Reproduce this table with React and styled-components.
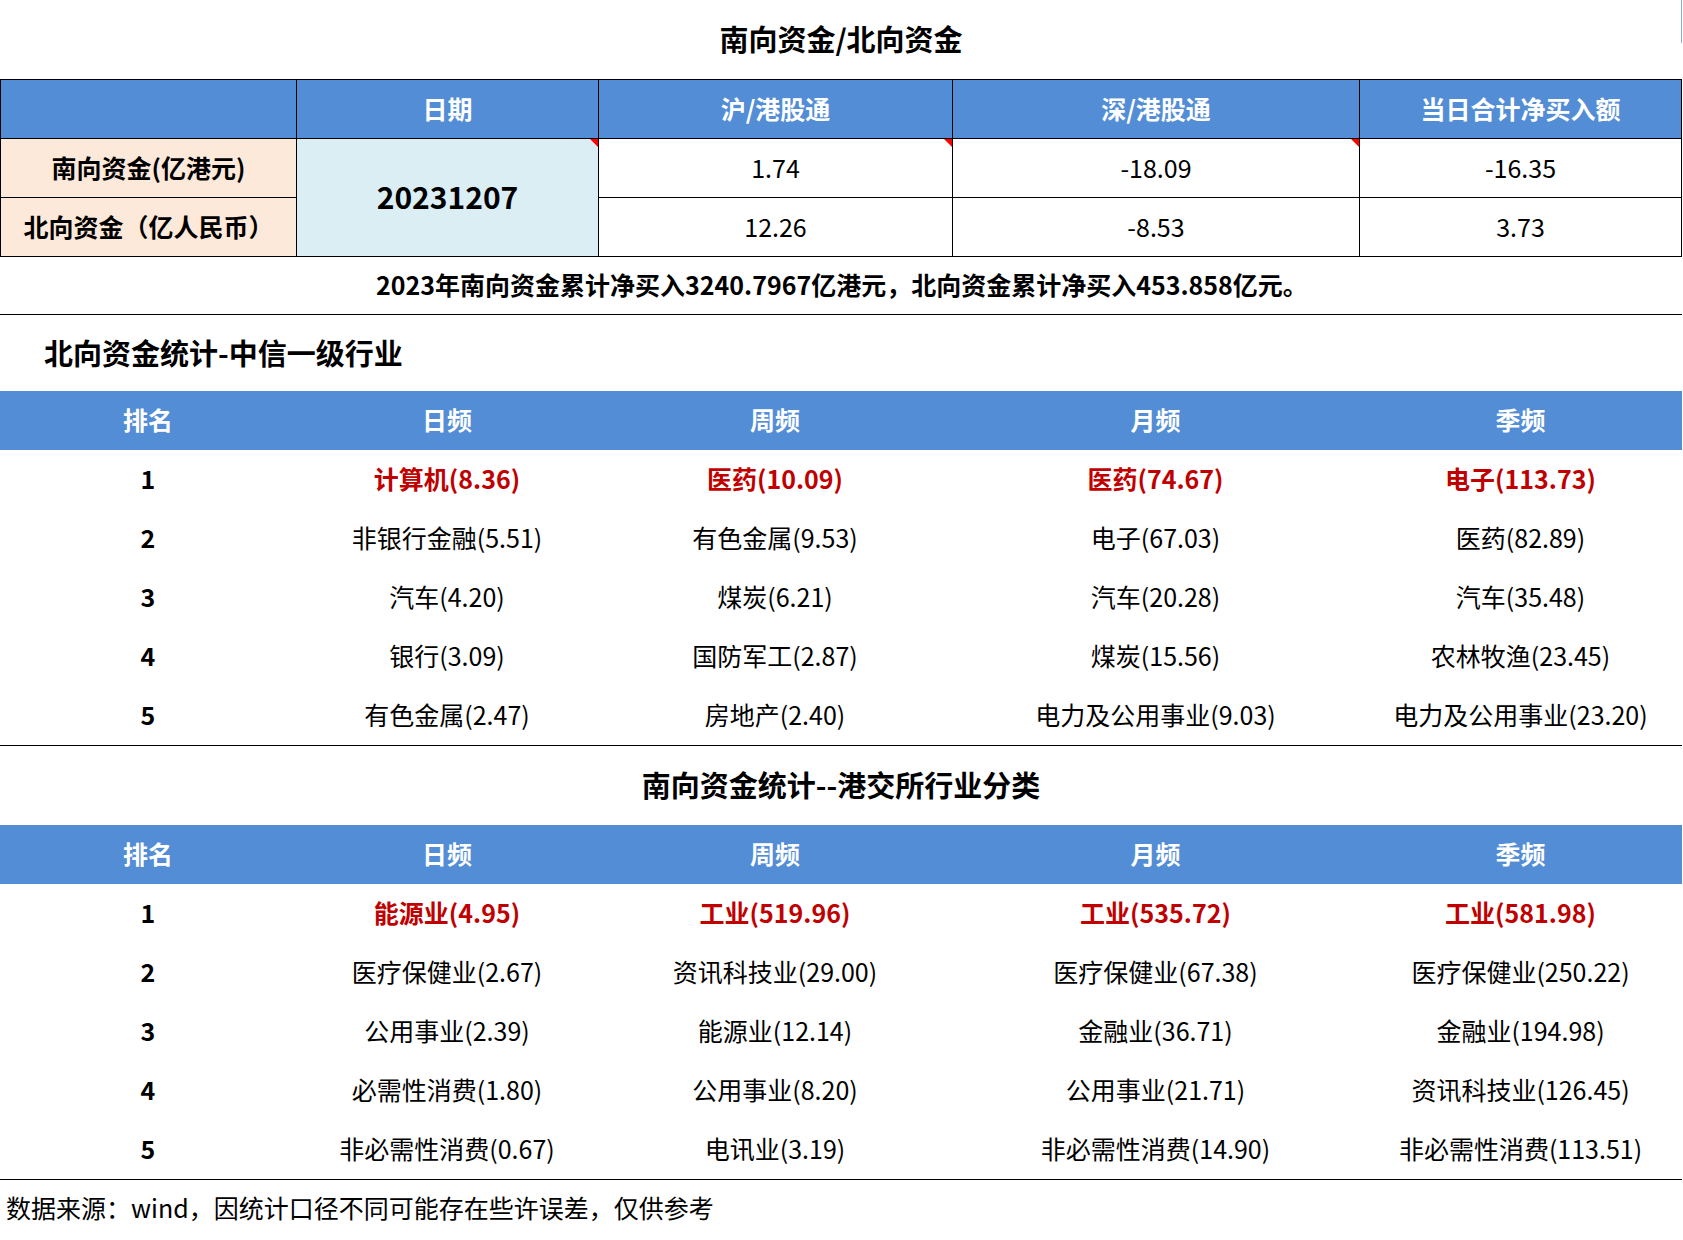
import styled, { createGlobalStyle, css } from "styled-components";

const GlobalStyle = createGlobalStyle`
  body {
    margin: 0;
    background: #fff;
    color: #000;
    font-family: "Noto Sans CJK SC", "Noto Sans", sans-serif;
  }
`;

const BLUE = "#538dd5";
const RED = "#c00000";

const flow = {
  south: { label: "南向资金(亿港元)", sh: "1.74", sz: "-18.09", total: "-16.35" },
  north: { label: "北向资金（亿人民币）", sh: "12.26", sz: "-8.53", total: "3.73" },
};

const northRanks = [
  ["计算机(8.36)", "医药(10.09)", "医药(74.67)", "电子(113.73)"],
  ["非银行金融(5.51)", "有色金属(9.53)", "电子(67.03)", "医药(82.89)"],
  ["汽车(4.20)", "煤炭(6.21)", "汽车(20.28)", "汽车(35.48)"],
  ["银行(3.09)", "国防军工(2.87)", "煤炭(15.56)", "农林牧渔(23.45)"],
  ["有色金属(2.47)", "房地产(2.40)", "电力及公用事业(9.03)", "电力及公用事业(23.20)"],
];

const southRanks = [
  ["能源业(4.95)", "工业(519.96)", "工业(535.72)", "工业(581.98)"],
  ["医疗保健业(2.67)", "资讯科技业(29.00)", "医疗保健业(67.38)", "医疗保健业(250.22)"],
  ["公用事业(2.39)", "能源业(12.14)", "金融业(36.71)", "金融业(194.98)"],
  ["必需性消费(1.80)", "公用事业(8.20)", "公用事业(21.71)", "资讯科技业(126.45)"],
  ["非必需性消费(0.67)", "电讯业(3.19)", "非必需性消费(14.90)", "非必需性消费(113.51)"],
];

const Page = styled.div`
  width: 1682px;
`;

const Title = styled.h1`
  position: relative;
  margin: 0;
  height: 79px;
  padding-bottom: 4px;
  box-sizing: border-box;
  display: flex;
  align-items: center;
  justify-content: center;
  font-size: 29px;
  font-weight: 700;

  &::after {
    content: "";
    position: absolute;
    right: 0;
    top: 0;
    width: 1px;
    height: 43px;
    background: #8faadc;
  }
`;

const FlowGrid = styled.div`
  display: grid;
  grid-template-columns: 295px 301px 353px 406px 321px;
  grid-template-rows: 58px 58px 58px;
  gap: 1px;
  padding: 1px;
  background: #000;
`;

const Cell = styled.div`
  position: relative;
  display: flex;
  align-items: center;
  justify-content: center;
  padding-bottom: 3px;
  background: ${(p) => p.$bg || "#fff"};
  color: ${(p) => (p.$light ? "#fff" : "#000")};
  font-size: ${(p) => p.$size || 25}px;
  font-weight: ${(p) => (p.$bold ? 700 : 400)};
  grid-row: ${(p) => (p.$rows ? `span ${p.$rows}` : "auto")};

  ${(p) =>
    p.$flag &&
    css`
      &::after {
        content: "";
        position: absolute;
        top: 0;
        right: 0;
        border-top: 8px solid #ff0000;
        border-left: 8px solid transparent;
      }
    `}
`;

const Note = styled.p`
  margin: 0;
  height: 58px;
  box-sizing: border-box;
  padding: 0 0 3px 2px;
  display: flex;
  align-items: center;
  justify-content: center;
  border-bottom: 1px solid #000;
  font-size: 25px;
  font-weight: 700;
`;

const SectionTitle = styled.h2`
  margin: 0;
  height: ${(p) => p.$height}px;
  box-sizing: border-box;
  padding-bottom: 3px;
  display: flex;
  align-items: center;
  justify-content: ${(p) => (p.$center ? "center" : "flex-start")};
  padding-left: ${(p) => (p.$center ? 0 : 44)}px;
  font-size: 29px;
  font-weight: 700;
`;

const RankTable = styled.div`
  display: grid;
  grid-template-columns: 296px 302px 354px 407px 1fr;
  grid-auto-rows: 59px;
  border-bottom: 1px solid #000;
`;

const HeadCell = styled.div`
  display: flex;
  align-items: center;
  justify-content: center;
  padding-bottom: 3px;
  background: ${BLUE};
  color: #fff;
  font-size: 25px;
  font-weight: 700;
`;

const RankCell = styled.div`
  display: flex;
  align-items: center;
  justify-content: center;
  padding-bottom: 3px;
  font-size: 25px;
  font-weight: ${(p) => (p.$bold ? 700 : 400)};
  color: ${(p) => (p.$hot ? RED : "#000")};
`;

const Footer = styled.p`
  margin: 0;
  height: 56px;
  box-sizing: border-box;
  padding: 0 0 3px 6px;
  display: flex;
  align-items: center;
  font-size: 25px;
`;

function Ranking({ rows }) {
  const heads = ["排名", "日频", "周频", "月频", "季频"];
  return (
    <RankTable>
      {heads.map((h) => (
        <HeadCell key={h}>{h}</HeadCell>
      ))}
      {rows.map((row, i) => [
        <RankCell key={`r${i}`} $bold>
          {i + 1}
        </RankCell>,
        ...row.map((v, j) => (
          <RankCell key={`${i}-${j}`} $bold={i === 0} $hot={i === 0}>
            {v}
          </RankCell>
        )),
      ])}
    </RankTable>
  );
}

export default function App() {
  return (
    <Page>
      <GlobalStyle />
      <Title>南向资金/北向资金</Title>

      <FlowGrid>
        <Cell $bg={BLUE} />
        <Cell $bg={BLUE} $light $bold>日期</Cell>
        <Cell $bg={BLUE} $light $bold>沪/港股通</Cell>
        <Cell $bg={BLUE} $light $bold>深/港股通</Cell>
        <Cell $bg={BLUE} $light $bold>当日合计净买入额</Cell>

        <Cell $bg="#fde9d9" $bold>{flow.south.label}</Cell>
        <Cell $bg="#daeef3" $bold $size={30} $rows={2} $flag>
          20231207
        </Cell>
        <Cell $flag>{flow.south.sh}</Cell>
        <Cell $flag>{flow.south.sz}</Cell>
        <Cell>{flow.south.total}</Cell>

        <Cell $bg="#fde9d9" $bold>{flow.north.label}</Cell>
        <Cell>{flow.north.sh}</Cell>
        <Cell>{flow.north.sz}</Cell>
        <Cell>{flow.north.total}</Cell>
      </FlowGrid>

      <Note>2023年南向资金累计净买入3240.7967亿港元，北向资金累计净买入453.858亿元。</Note>

      <SectionTitle $height={76}>北向资金统计-中信一级行业</SectionTitle>
      <Ranking rows={northRanks} />

      <SectionTitle $height={79} $center>南向资金统计--港交所行业分类</SectionTitle>
      <Ranking rows={southRanks} />

      <Footer>数据来源：wind，因统计口径不同可能存在些许误差，仅供参考</Footer>
    </Page>
  );
}
